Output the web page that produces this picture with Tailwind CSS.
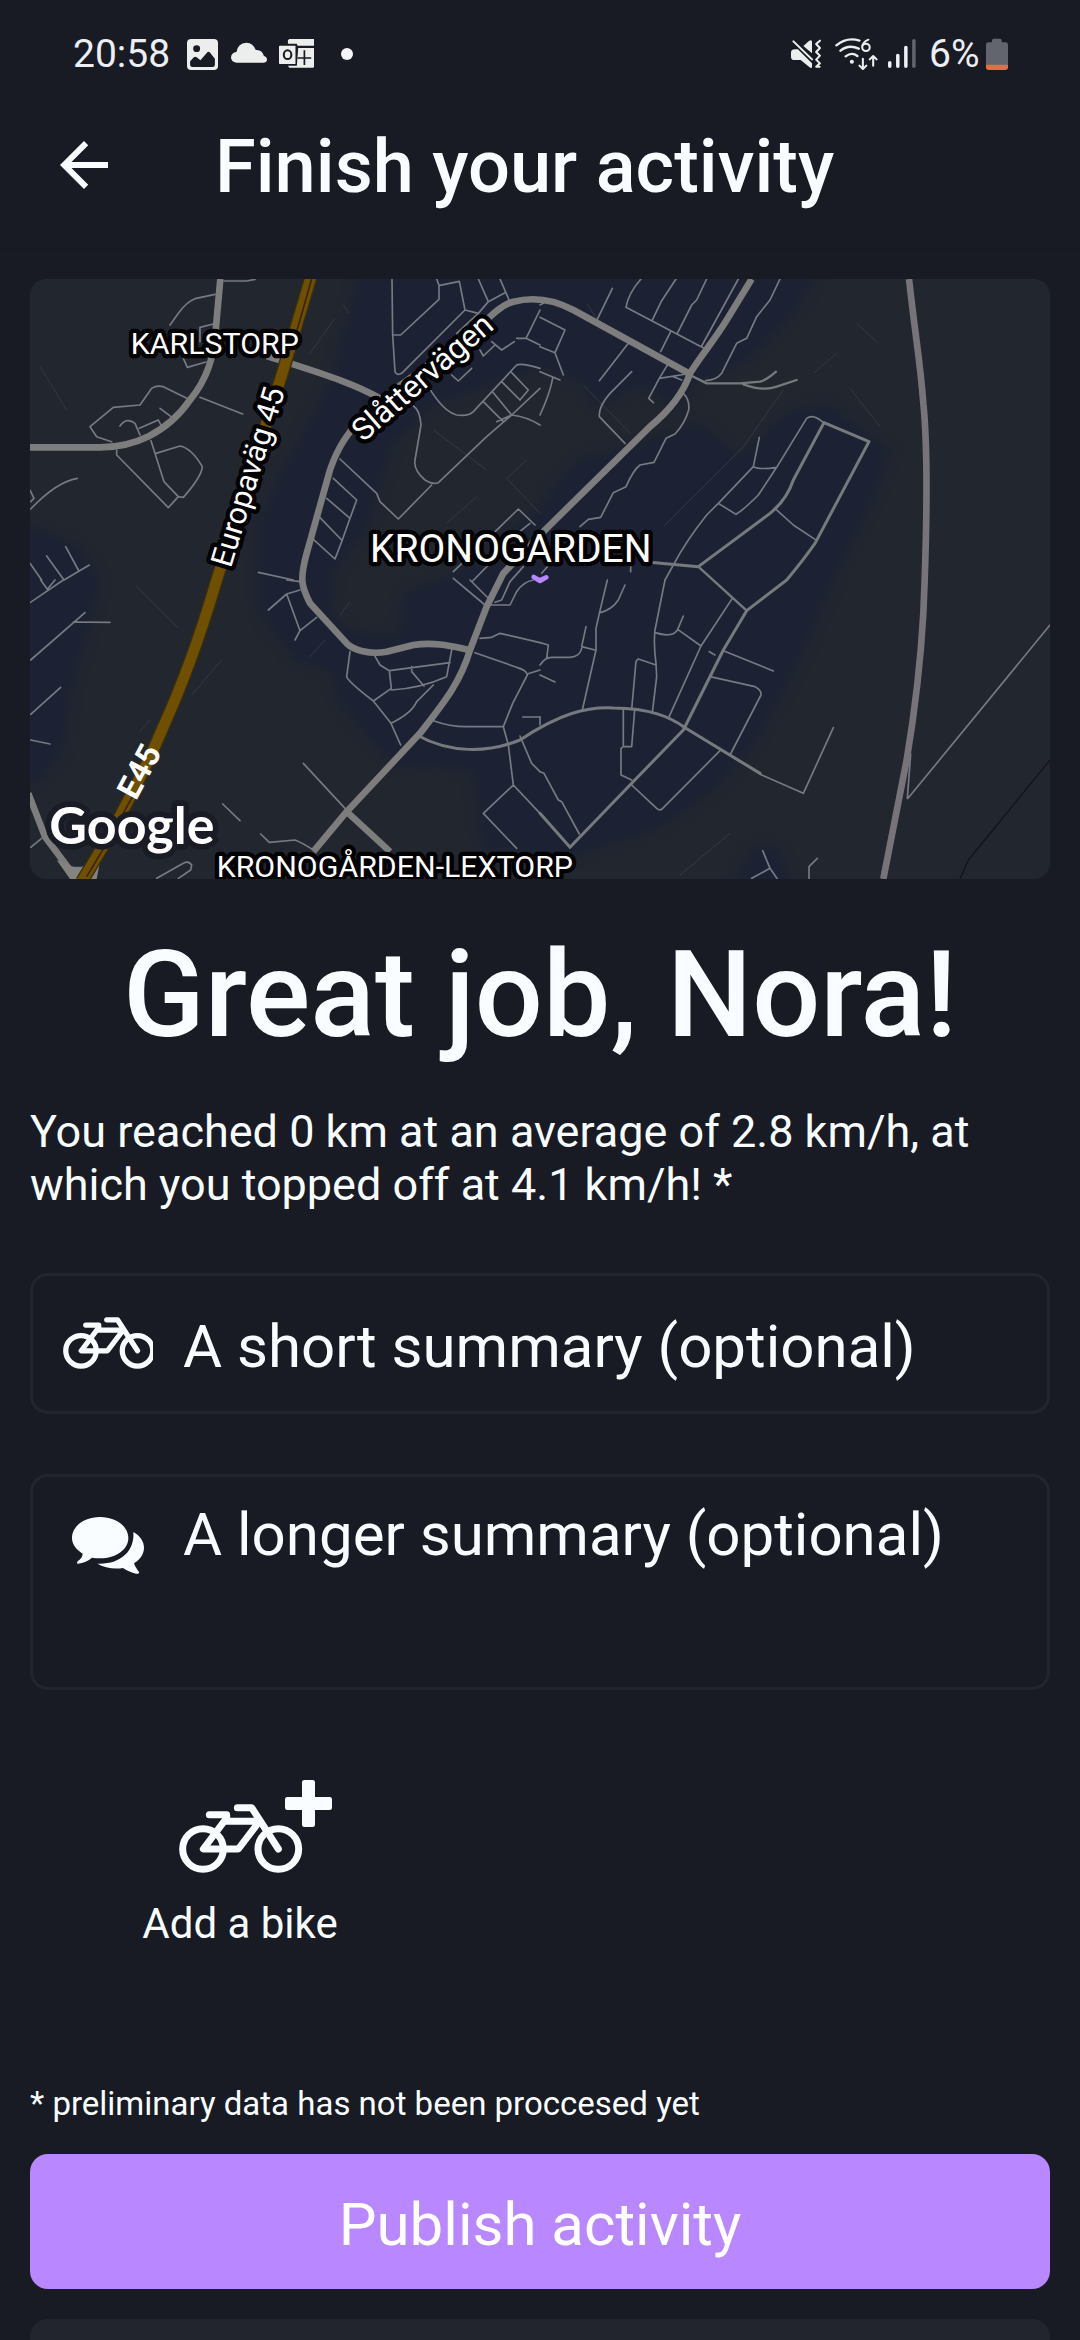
<!DOCTYPE html>
<html lang="en">
<head>
<meta charset="utf-8">
<meta name="viewport" content="width=device-width, initial-scale=1">
<title>Finish your activity</title>
<script src="https://cdn.jsdelivr.net/npm/@tailwindcss/browser@4"></script>
</head>
<body class="flex h-screen flex-col overflow-hidden bg-[#181b23] font-['Roboto',sans-serif] text-[#fafdff]">

<!-- Status bar -->
<div class="flex h-[90px] shrink-0 items-center pt-[18px] pr-[72px] pl-[73px] text-[39px] leading-[44px] text-[#eceef4]">
  <span class="w-[114px]">20:58</span>
  <svg class="h-[35px] w-[31px]" preserveAspectRatio="none" viewBox="543 111 90 105" aria-hidden="true"><path fill="#eceeee" fill-rule="evenodd" d="M555 117H621Q633 117 633 129V198Q633 210 621 210H555Q543 210 543 198V129Q543 117 555 117ZM571 136A10 10 0 1 0 571 156A10 10 0 1 0 571 136ZM552 184V194Q552 201 559 201H617Q624 201 624 194V176L609 157Q606 154 602 157L582 181L571 172Q567 169 563 172Z"/></svg>
  <svg class="ml-[13px] h-[35px] w-9" preserveAspectRatio="none" viewBox="671 111 105 105" aria-hidden="true"><path fill="#eceeee" d="M687 188Q671 186 671 172Q672 158 687 156Q690 130 716 128Q736 129 743 150Q762 148 767 168Q776 171 776 180Q775 188 765 188Z"/></svg>
  <svg class="ml-3 h-[35px] w-[35px]" preserveAspectRatio="none" viewBox="810 111 102 105" aria-hidden="true"><path fill="#eceeee" d="M840 117H912V137H864L862 131H836V121ZM812 137H858V192H812Q810 192 810 190V139ZM866 144H912V200Q912 203 908 203H840L836 197H862Z"/><path fill="none" stroke="#181b23" stroke-width="5" d="M864 174H904M884 151V195"/><ellipse cx="835" cy="164" rx="11" ry="13" fill="none" stroke="#181b23" stroke-width="6"/></svg>
  <span class="ml-[27px] size-3 rounded-full bg-[#f4f6fa]"></span>
  <div class="ml-auto flex items-center">
    <svg class="h-[35px] w-[31px]" preserveAspectRatio="none" viewBox="728 111 90 105" aria-hidden="true"><path fill="#eceeee" d="M728 158Q728 148 740 148H748L789 190V200Q789 207 782 202L756 180H738Q728 180 728 170ZM764 138L780 123Q789 117 789 126V160Z"/><path fill="none" stroke="#eceeee" stroke-width="6" stroke-linecap="round" stroke-linejoin="round" d="M735 124L789 178M812 122L801 132L812 144L801 156L812 167L801 179L812 190L801 200H811"/></svg>
    <svg class="ml-[13px] h-[35px] w-[43px]" preserveAspectRatio="none" viewBox="857 111 125 105" aria-hidden="true"><g fill="none" stroke="#eceeee" stroke-width="7" stroke-linecap="round" stroke-linejoin="round"><path d="M861 136Q892 110 928 122M873 152Q897 132 926 146M888 169Q906 155 922 168"/><path stroke-width="6" d="M954 119Q937 126 936 142A11 11 0 1 0 947 131Q940 131 937 137M938 176V205M928 197L938 207L948 197M968 197V169M958 178L968 168L978 178"/></g><circle cx="906" cy="185" r="6" fill="#eceeee"/></svg>
    <svg class="ml-[10px] h-[35px] w-[28px]" preserveAspectRatio="none" viewBox="1010 111 80 105" aria-hidden="true"><g stroke-width="10" stroke-linecap="round" stroke="#eef0f6"><path d="M1015 188V199M1038 166V199M1061 142V199"/><path stroke="#62646c" d="M1084 122V199"/></g></svg>
    <span class="ml-[13px] w-[57px]">6%</span>
    <svg class="h-[35px] w-[22px]" preserveAspectRatio="none" viewBox="1294 111 63 105" aria-hidden="true"><path fill="#62646e" d="M1311 121Q1311 116 1316 116H1334Q1339 116 1339 121V127H1350Q1357 127 1357 134V195H1294V134Q1294 127 1301 127H1311Z"/><path fill="#e0703f" d="M1294 194H1357V202Q1357 210 1349 210H1302Q1294 210 1294 202Z"/></svg>
  </div>
</div>

<!-- App bar -->
<header class="flex h-[160px] shrink-0 items-center border-b border-[#16181f] pr-[30px] pb-[10px] pl-12">
  <button type="button" aria-label="Back" class="size-[72px]">
    <svg class="size-full" viewBox="0 0 24 24" fill="currentColor" aria-hidden="true"><path d="M20 11H7.830l5.590-5.590L12 4l-8 8 8 8 1.410-1.410L7.830 13H20z"/></svg>
  </button>
  <h1 class="ml-[95px] pt-1 text-[74px] leading-[84px] font-medium">Finish your activity</h1>
</header>

<main class="flex min-h-0 flex-1 flex-col overflow-y-auto px-[30px] pt-[29px] [scrollbar-width:none]">
  <!-- Route map -->
  <svg class="block h-auto w-full shrink-0 rounded-[16px]" viewBox="30 27 3060 1800" role="img" aria-label="Map of the activity">
    <defs><filter id="soft" x="-10%" y="-10%" width="120%" height="120%" color-interpolation-filters="sRGB"><feGaussianBlur stdDeviation="18"/></filter></defs>
    <rect x="30" y="27" width="3060" height="1800" fill="#22262f"/>
    <!-- Built-up areas -->
    <g fill="#1c2234" filter="url(#soft)">
      <path d="M1020 0H2400L2320 130L2170 280L2040 330L1960 420L1860 340L1720 420L1690 340L1560 290L1240 400L1120 520L1040 780L940 900L930 1040L1010 1090L1140 1100L1150 970L1290 920L1550 720L1670 570L1860 520L2040 460L2160 560L2300 430L2420 400L2610 540L2560 680L2440 930L2320 1210L2200 1420L2080 1560L1900 1680L1650 1760L1390 1740L1357 1497L1120 1485L960 1300L930 1200L830 1175L713 1020L713 770L790 600L940 320Z"/>
      <path d="M0 760L60 780L180 830L240 930L190 1130L150 1260L130 1430L60 1530L0 1560Z"/>
      <path d="M2140 1850L2200 1730L2270 1730L2320 1850Z"/>
    </g>
    <!-- Footpaths -->
    <g fill="none" stroke="#353943" stroke-width="3">
      <path d="M945 145L870 250M970 105L988 130M1240 480L1400 600M1520 570L1460 625L1560 730M60 290L140 420M1370 680L1280 760M1700 100L1740 160M1690 345L1830 490M2510 160L2570 215M2450 250L2380 310M2490 355L2580 470M2290 360L2170 530L1930 770M350 950L475 1075M605 1170L515 1275M390 1350L360 1385M990 995L960 1035M915 1110L870 1160M2130 1690L1980 1815"/>
    </g>
    <!-- Streets -->
    <g fill="none" stroke="#777a82" stroke-width="5" stroke-linejoin="round" stroke-linecap="round">
      <path d="M612 33H680L705 28M585 73L525 86Q500 95 475 130L450 165M580 162L540 172V215M490 265L502 292L558 276M275 515L230 500L210 470L280 412L360 405L395 355Q410 345 430 350L505 387M300 468Q320 440 345 460L360 495M358 475L415 450L425 470M420 415L460 445M540 382L668 432M290 540V555L445 713L475 680L432 635L393 512M408 550L480 528Q515 535 547 590Q545 620 490 682L475 680M172 625Q110 635 32 717M30 660L42 685L32 695M30 880L65 930M80 858L132 930L208 885M137 830L175 900"/>
      <path d="M1116 27L1118 195L1125 305Q1130 318 1145 310L1335 120L1318 34L1260 46M1118 195H1142L1257 88V46L1250 27M1375 27L1405 95L1375 130L1335 120M1405 95L1455 68M1440 27L1468 92M1375 130L1310 190M1560 120L1518 205L1560 225M1490 205H1518M1415 215L1445 240L1483 215M1380 240L1390 258L1425 225M1295 315L1315 333L1355 295M1225 350Q1270 425 1310 435Q1345 440 1360 425L1490 285Q1505 278 1560 295M1475 308L1525 360L1500 390L1445 335M1420 368L1475 435L1430 455M1390 395L1450 455M1560 355L1475 435L1400 500L1255 638Q1240 645 1215 630Q1180 600 1185 570L1203 465Q1200 420 1180 408M1475 435Q1520 440 1560 465M1235 645L1135 747L1080 695L1070 670L960 567M940 625L1010 690L990 745L965 815L945 867L880 808M920 685L990 745M900 743L965 810M1410 800L1495 717L1545 765M1300 905L1410 800M1530 760L1480 800M715 907L820 930M1358 933L1410 880M1425 997L1445 990L1470 935L1510 890M1565 910L1582 890"/>
      <g transform="translate(1560 0)"><path d="M303 27Q265 70 258 112L492 235M408 27L365 92L338 148M500 27L470 90L455 105L412 190M595 27L485 228M720 27L690 90L650 140L620 205L590 220L555 290L545 310Q530 330 497 332M217 55L170 152M265 220L178 332M275 305L210 370Q175 410 178 440L255 520M392 185L362 245M385 280L358 325L326 385L340 398M358 325L440 312M400 320L425 330M0 142L75 180L45 248L0 230M45 248L70 315M0 305L60 330M38 325Q30 370 0 435M430 370Q450 390 446 420Q435 460 405 492L378 505L342 577L300 585Q280 600 258 650L220 668L182 742L145 748L120 770M0 105L10 100M658 502L640 590Q660 600 710 592M640 590L535 700L588 733Q610 720 655 675L710 592L800 445Q820 430 850 458M535 700L500 735Q440 810 400 885L375 930M708 718L760 765L825 808M272 890V905"/></g>
      <g transform="translate(0 930)"><path d="M62 0L82 28L105 0M30 68L130 0M32 240L195 98M160 126L270 127M32 403L122 322M32 480L90 492M32 802L65 775M410 895L490 850Q505 840 515 855L512 870L475 895M608 672L660 722M722 762L748 787L825 780Q850 790 880 810M745 90L800 42L840 30M800 42L840 152L890 112M840 152L825 180M800 0L840 5M990 215L980 290Q985 305 1060 363L1113 430L1142 495M1060 220L1080 255L1108 272L1290 248M1108 272L1114 325L1060 363M1114 330Q1200 325 1280 290L1296 205M1175 260V275L1212 318M1240 315L1190 365Q1175 400 1113 430M1300 -5L1395 75H1470L1490 35Q1510 5 1540 0M1350 0L1410 60M1380 175L1415 172L1440 160L1560 188M1365 218L1490 262Q1520 270 1522 285L1478 370L1450 440L1465 495L1480 615L1390 700L1490 805M1240 422Q1290 440 1340 440H1450M1560 270L1522 282M1508 411H1560M1500 468L1535 550L1560 575M1480 615L1560 700M850 550L975 685"/></g>
      <g transform="translate(1560 930)"><path d="M202 0L178 100L168 145V210L127 390M255 15L235 60Q215 90 180 98M138 140L125 200L165 210M0 188L25 195L20 235M0 255Q15 232 35 232H90Q120 230 125 205M0 285L45 306M0 411V435M375 0L345 150Q340 190 348 250L350 290L337 398M345 158Q400 175 413 148L430 108M413 148L483 198M577 55L483 198L385 415M348 255L295 237Q287 240 287 255L275 388M250 385V500H275L284 390M250 500L243 505V585L275 600M0 575L12 580L55 660L65 665L118 762M510 290L645 320Q665 330 663 345L570 525M550 212L700 273M508 215L525 225M540 512L365 688Q358 692 350 685L275 615M880 443L790 640L665 585L430 440M1112 522L1102 655M1104 655L1530 135M635 895L690 865M668 812L690 865L712 897M807 897V860L832 835"/></g>
    </g>
    <path d="M3090 1470L2845 1770L2820 1827" fill="none" stroke="#12141a" stroke-width="4"/>
    <!-- Collector roads -->
    <g fill="none" stroke="#777a7c" stroke-width="9" stroke-linejoin="round" stroke-linecap="round">
      <path d="M1890 877L2035 890L2250 730Q2300 690 2320 630L2412 458L2547 515L2385 820Q2350 870 2300 930L2180 1022L2110 1140L1990 1380L1830 1545L1650 1732L1560 1630"/>
      <path stroke-width="7" d="M2035 890L2180 1022M2010 315L2060 340H2160L2220 335Q2240 330 2268 305M2170 343Q2230 365 2270 350L2330 330"/>
      <path d="M1190 1395C1290 1450 1400 1450 1500 1410C1620 1330 1700 1310 1780 1314C1890 1315 1950 1340 1995 1373L2220 1510"/>
    </g>
    <!-- Main roads -->
    <g fill="none" stroke="#7d7d7d" stroke-width="20" stroke-linejoin="round">
      <path d="M601 27L588 170C585 260 560 330 510 390C440 490 340 532 240 532H30"/>
      <path d="M740 258L820 283C920 315 1010 345 1080 385"/>
      <path d="M2010 312L1660 120C1600 88 1540 80 1480 95C1440 105 1400 150 1370 180L1080 390C980 480 950 540 930 600L860 850C838 930 845 950 870 1000L980 1120C1000 1140 1050 1155 1100 1145L1180 1125C1250 1115 1300 1130 1350 1140"/>
      <path d="M2195 27L2120 150C2080 215 2040 260 2010 310C1990 370 1950 420 1890 470L1580 775L1450 910L1400 1010L1350 1140C1320 1240 1270 1300 1200 1390L980 1625L880 1745M980 1625L1110 1745"/>
      <path stroke="#767478" d="M2667 27C2690 230 2700 270 2710 400C2722 520 2722 700 2714 930L2710 1030C2700 1210 2680 1350 2660 1470L2590 1827"/>
      <path d="M25 1570L75 1700L150 1800H220"/>
    </g>
    <path d="M110 1770L170 1795L240 1775L230 1827H150Z" fill="#85837f"/>
    <!-- Motorway -->
    <g fill="none">
      <path stroke="#3a2e12" stroke-width="40" d="M873 20L790 300L590 930C540 1100 480 1260 430 1370C380 1490 300 1650 185 1835"/>
      <path stroke="#6f4f00" stroke-width="32" d="M873 20L790 300L590 930C540 1100 480 1260 430 1370C380 1490 300 1650 185 1835"/>
      <path stroke="#3b2413" stroke-width="5" d="M875 27L830 185M340 1575L260 1720L200 1820"/>
    </g>
    <!-- Recorded track -->
    <path d="M1541 921L1558 931L1579 922L1560 933Z" fill="#b987ff" stroke="#b987ff" stroke-width="14" stroke-linejoin="round"/>
    <!-- Place labels -->
    <g fill="#fff" stroke="#000" stroke-width="26" stroke-linejoin="round" paint-order="stroke" font-size="91">
      <text x="332" y="251">KARLSTORP</text>
      <text x="1050" y="875" font-size="117">KRONOGARDEN</text>
      <text x="590" y="1822">KRONOGÅRDEN-LEXTORP</text>
      <text transform="translate(632 896) rotate(-73)" font-size="92">Europaväg 45</text>
      <text transform="translate(1030 518) rotate(-41)" font-size="94">Slåttervägen</text>
      <text transform="translate(348 1594) rotate(-62)" font-size="98" font-weight="700" stroke="none">E45</text>
      <text x="88" y="1722" font-family="Lato" font-weight="700" font-size="156" stroke="#191c24" stroke-width="34">Google</text>
    </g>
  </svg>

  <h2 class="mt-[46px] shrink-0 text-center text-[120px] leading-[140px] font-medium">Great job, Nora!</h2>
  <p class="mt-[40px] shrink-0 text-[45px] leading-[53px]">You reached 0 km at an average of 2.8 km/h, at which you topped off at 4.1 km/h! *</p>

  <form class="mt-[62px] flex shrink-0 flex-col">
    <label class="flex h-[141px] items-center rounded-[18px] border-3 border-[#22252f] pl-[30px]">
      <svg class="mb-[2px] h-[52px] w-[90px] shrink-0" viewBox="177 162 360 208" aria-hidden="true"><g fill="none" stroke="currentColor" stroke-width="21" stroke-linecap="round" stroke-linejoin="round"><circle cx="249" cy="297" r="61"/><circle cx="475" cy="297" r="61"/><path d="M475 297L395 173H352M268 194H320V204L250 297H355L418 214H320"/></g></svg>
      <input type="text" aria-label="A short summary" placeholder="A short summary (optional)" class="ml-[30px] min-w-0 flex-1 bg-transparent pt-[6px] text-[60px] leading-[72px] outline-none placeholder:text-[#fafdff]">
    </label>
    <label class="mt-[60px] flex h-[216px] items-start rounded-[18px] border-3 border-[#22252f] pt-[22px] pl-[39px]">
      <svg class="mt-[18px] h-[57px] w-[72px] shrink-0" viewBox="156 802 216 171" fill="currentColor" aria-hidden="true"><path d="M240 802C288 802 325 830 325 865C325 900 288 926 240 926C232 926 224 925 216 924C205 933 190 941 174 942C170 942 170 937 174 934C182 928 188 920 188 912C168 900 156 883 156 865C156 830 192 802 240 802Z"/><path d="M340 847C360 858 372 875 372 894C372 912 362 928 342 941C345 950 350 958 357 967C358 972 354 973 348 972C335 970 322 963 309 955C280 960 252 953 232 942C300 945 345 905 340 847Z"/></svg>
      <textarea aria-label="A longer summary" placeholder="A longer summary (optional)" class="ml-[39px] h-[160px] min-w-0 flex-1 resize-none bg-transparent text-[60px] leading-[72px] outline-none placeholder:text-[#fafdff]"></textarea>
    </label>

    <div class="mt-[90px] grid grid-cols-2">
      <button type="button" class="flex w-[420px] flex-col items-center text-[42px] leading-[50px]">
        <svg class="ml-[31px] h-[93px] w-[153px]" viewBox="177 90 459 279" aria-hidden="true"><g fill="none" stroke="currentColor" stroke-width="21" stroke-linecap="round" stroke-linejoin="round"><circle cx="249" cy="297" r="61"/><circle cx="475" cy="297" r="61"/><path d="M475 297L395 173H352M268 194H320V204L250 297H355L418 214H320"/></g><path fill="currentColor" d="M553 90H578Q585 90 585 97V141H629Q636 141 636 148V173Q636 180 629 180H585V224Q585 231 578 231H553Q546 231 546 224V180H502Q495 180 495 173V148Q495 141 502 141H546V97Q546 90 553 90Z"/></svg>
        <span class="mt-[26px]">Add a bike</span>
      </button>
    </div>

    <p class="mt-[135px] text-[33px] leading-[40px]">* preliminary data has not been proccesed yet</p>
    <button type="submit" class="mt-[30px] h-[135px] rounded-[18px] bg-[#b987ff] pt-[6px] text-[60px] leading-[72px] text-white">Publish activity</button>
    <button type="button" aria-label="Discard activity" class="mt-[30px] h-[135px] rounded-[18px] bg-[#22252d]"></button>
  </form>
</main>
</body>
</html>
